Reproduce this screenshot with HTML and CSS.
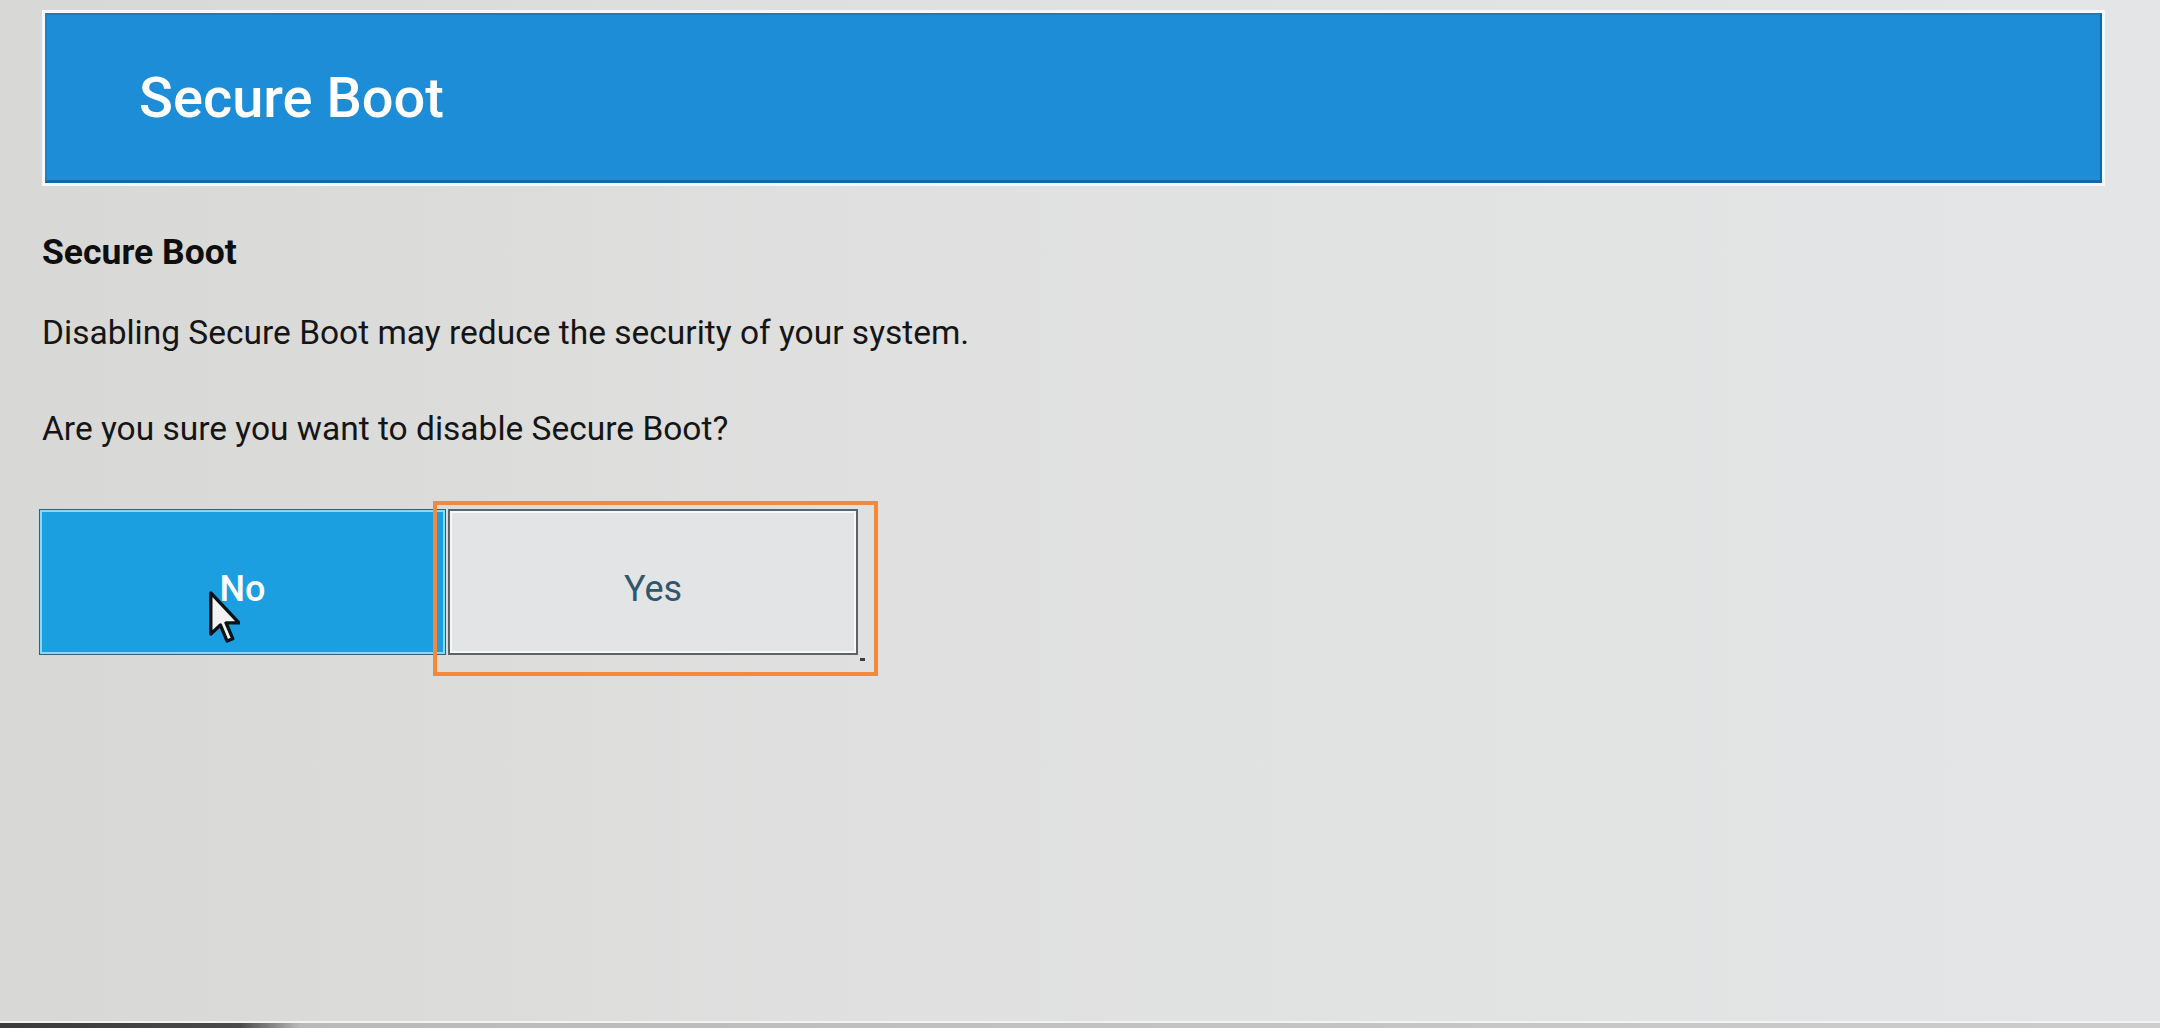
FILE: index.html
```html
<!DOCTYPE html>
<html lang="en">
<head>
<meta charset="utf-8">
<title>Secure Boot</title>
<link rel="stylesheet" href="styles.css">
</head>
<body>
<div class="screen">
  <header class="header">
    <div class="header-bar">
      <h1 class="header-title">Secure Boot</h1>
    </div>
  </header>
  <main class="content">
    <h2 class="section-title">Secure Boot</h2>
    <p class="message first">Disabling Secure Boot may reduce the security of your system.</p>
    <p class="message second">Are you sure you want to disable Secure Boot?</p>
    <div class="actions">
      <button class="btn btn-no" type="button">No
        <svg class="cursor" width="31" height="54" viewBox="0 0 12 20" aria-hidden="true">
          <path d="M0.7 0.7 L0.7 16.6 L4.4 13.1 L7 19.3 L9.2 18.4 L6.6 12.3 L11.6 12.3 Z" fill="#f2f2f2" stroke="#0d1216" stroke-width="1.3" stroke-linejoin="round"/>
        </svg>
      </button>
      <button class="btn btn-yes" type="button">Yes
        <span class="focus-ring"></span>
        <span class="corner-mark"></span>
      </button>
    </div>
  </main>
  <footer class="bezel"></footer>
</div>
</body>
</html>
```
FILE: styles.css
```css
html, body {
  margin: 0;
  padding: 0;
}

body {
  width: 2160px;
  height: 1028px;
  overflow: hidden;
  background: linear-gradient(90deg, #d8d8d6 0%, #dfe0df 40%, #e4e5e6 100%);
  font-family: Roboto, "Noto Sans", "Liberation Sans", sans-serif;
  color: #121212;
}

.screen {
  height: 1028px;
  display: flex;
  flex-direction: column;
}

.header {
  margin: 10px 55px 0 42px;
  border: 3px solid #f5f8fb;
}

.header-bar {
  box-sizing: border-box;
  height: 170px;
  background: #1c8dd6;
  border: 2px solid #1267a6;
  border-bottom-width: 3px;
  border-top-color: #1a7cc0;
  border-left-color: #1a82c6;
  display: flex;
  align-items: center;
  padding-left: 92px;
}

.header-title {
  margin: 0;
  font-size: 56px;
  line-height: 66px;
  font-weight: 500;
  color: #ffffff;
}

.content {
  flex: 1;
  padding-left: 42px;
}

.section-title {
  margin: 46px 0 0 0;
  font-size: 35.5px;
  line-height: 40px;
  font-weight: 700;
  color: #0e0e0e;
}

.message {
  margin: 0;
  font-size: 33.5px;
  line-height: 40px;
  font-weight: 400;
  color: #151515;
}

.message.first {
  margin-top: 41px;
}

.message.second {
  margin-top: 56px;
}

.actions {
  margin-top: 60px;
  margin-left: -3px;
  display: flex;
  gap: 2px;
}

.btn {
  position: relative;
  box-sizing: border-box;
  height: 146px;
  margin: 0;
  padding: 14px 0 0 0;
  font-family: Roboto, "Noto Sans", "Liberation Sans", sans-serif;
  font-size: 36px;
  line-height: 40px;
  display: flex;
  align-items: center;
  justify-content: center;
  cursor: default;
}

.btn-no {
  width: 407px;
  background: #1b9fe0;
  color: #ffffff;
  font-weight: 500;
  border: 1px solid #3a5d73;
  box-shadow: inset 0 0 0 2px #88d9f7;
}

.btn-yes {
  width: 410px;
  background: #e3e4e5;
  color: #2f566d;
  font-weight: 400;
  border: 2px solid #5d6467;
  box-shadow: inset 0 0 0 2px #f8f8f8;
}

.cursor {
  position: absolute;
  left: 169px;
  top: 80px;
}

.focus-ring {
  position: absolute;
  left: -17px;
  top: -10px;
  right: -22px;
  bottom: -23px;
  border: 4px solid #f6883a;
  pointer-events: none;
}

.corner-mark {
  position: absolute;
  right: -9px;
  bottom: -8px;
  width: 5px;
  height: 3px;
  background: #3a3d40;
}

.bezel {
  height: 5px;
  border-top: 2px solid #f3f3f3;
  background: linear-gradient(90deg, #3a3a3a 0, #4a4a4a 240px, #b9b9b9 300px, #cdcdcd 100%);
}
```
